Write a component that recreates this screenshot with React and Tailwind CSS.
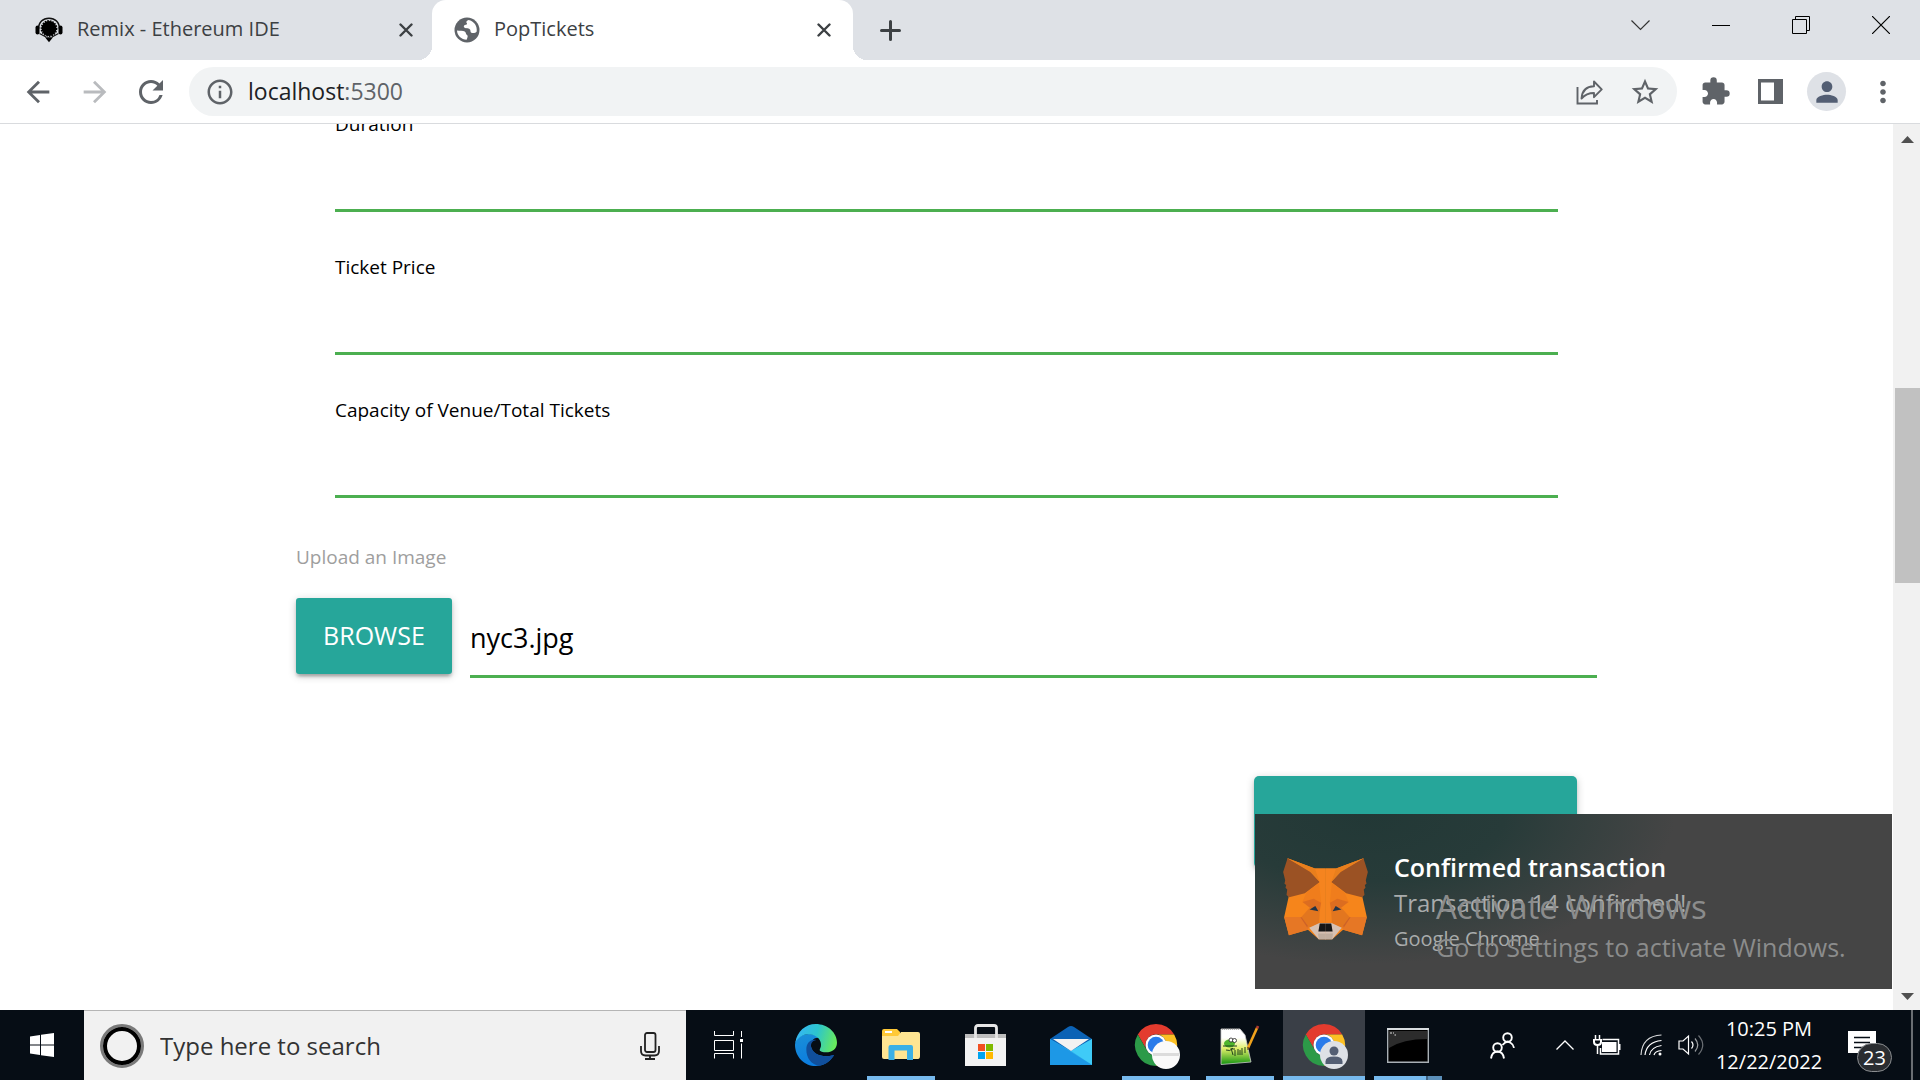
import React from "react";
import {
  MdArrowBack,
  MdArrowForward,
  MdRefresh,
  MdInfoOutline,
  MdStarBorder,
  MdExtension,
  MdPerson,
  MdMoreVert,
} from "react-icons/md";

/* ---------- browser icons ---------- */

function RemixIcon() {
  return (
    <svg viewBox="0 0 28 26" className="h-[26px] w-[28px] shrink-0">
      <path d="M3.500 12C3.500 5 8 1.200 14 1.200S24.500 5 24.500 12" fill="none" stroke="#111" strokeWidth="1.600" />
      <rect x="0.500" y="8.500" width="4" height="9" rx="2" fill="#000" />
      <rect x="23.500" y="8.500" width="4" height="9" rx="2" fill="#000" />
      <circle cx="14" cy="11.500" r="7.400" fill="#000" />
      <circle cx="14" cy="11.500" r="7.600" fill="none" stroke="#000" strokeWidth="1.600" strokeDasharray="1.600 1" />
      <path d="M4.500 16.500 11 20M23.500 16.500 17 20" stroke="#111" strokeWidth="1.200" />
      <path d="M10 20.300h8l-4 5z" fill="#000" />
    </svg>
  );
}

function GlobeIcon() {
  return (
    <svg viewBox="0 0 26 26" className="h-[26px] w-[26px] shrink-0">
      <circle cx="13" cy="13" r="12.500" fill="#5f6368" />
      <path d="M3 13.600c2.600.3 6.200.1 7.700 1 1.500 1 .9 2.700 2.300 3.300 1.300.6.5 2.400-.4 4.900C7.500 22.800 3 18.500 3 13.600z" fill="#fff" />
      <path d="M14.500 3c-2.600 1-2.300 2.400-1.600 3.300.7 1-.8 1.600-2 1.800-1.300.3-1.500 1.900-.3 2.600 1.400.8 4.700.2 5.600 2.100.5 1.200 0 2.500 1.200 3 1.700.7 4.300.1 5.300-1.300C23.500 9 20 4 14.500 3z" fill="#fff" />
    </svg>
  );
}

function CrossIcon() {
  return (
    <svg viewBox="0 0 14 14" className="h-[14px] w-[14px]">
      <path d="M1.500 1.500 12.500 12.500M12.500 1.500 1.500 12.500" stroke="#3c4043" strokeWidth="2.400" strokeLinecap="round" />
    </svg>
  );
}

function ShareIcon() {
  return (
    <svg viewBox="0 0 27 26" className="h-[26px] w-[27px]" fill="none" stroke="#5f6368" strokeWidth="1.900">
      <path d="M1.500 8v16.500h19.500V21" />
      <path d="M18 2.500v4.700C10 7.500 6 12 5.500 19.500 9 15.500 12.500 14 18 14v4.200l7.700-7.800z" strokeLinejoin="round" />
    </svg>
  );
}

function SidePanelIcon() {
  return (
    <svg viewBox="0 0 25 25" className="h-[25px] w-[25px]">
      <path d="M0 0h25v25H0zM3 3.500v18h13v-18z" fill="#5f6368" fillRule="evenodd" />
    </svg>
  );
}

/* ---------- notification artwork ---------- */

function FoxHalf() {
  return (
    <>
      <path d="M53 57 134 87H165V296H145L113 268 57 284 43 230 56 172 60 130z" fill="#f6851b" />
      <path d="M53 57 40 97 46 122 44 132 49 136 47 144 52 149 50 165 58 172 104 160 148 127 120 95z" fill="#9b5224" />
      <path d="M53 57 134 87 148 127 120 97z" fill="#e97f1d" />
      <path d="M134 87 148 127 152 185 146 250H165V87z" fill="#f5841f" />
      <path d="M97 186 108 159 146 130 152 188z" fill="#f07d1c" />
      <path d="M97 186 130 176 152 188 148 213 118 202z" fill="#dc6d20" />
      <path d="M43 230 94 230 118 256 113 268 57 284z" fill="#e67725" />
      <path d="M91 231 122 231 111 261z" fill="#cd6229" />
      <path d="M94 230 118 203 148 213 146 250 117 262z" fill="#e2761f" />
      <path d="M118 208 135 198 144 213z" fill="#233447" />
      <path d="M117 262 147 248 166 248 166 296 145 296z" fill="#d7c1b3" />
      <path d="M143 279 166 279 166 296 145 296z" fill="#c0ad9e" />
      <path d="M148 249 166 249 166 273 144 273z" fill="#161616" />
    </>
  );
}

function FoxIcon() {
  return (
    <svg viewBox="40 56 250 242" className="h-[82px] w-[85px] shrink-0">
      <g>
        <FoxHalf />
      </g>
      <g transform="translate(330 0) scale(-1 1)">
        <FoxHalf />
      </g>
    </svg>
  );
}

/* ---------- taskbar icons ---------- */

function WindowsLogo() {
  return (
    <svg viewBox="0 0 24 24" className="h-6 w-6" fill="#fff">
      <path d="M0 3.400 10 2v9.500H0zM11 1.800 24 0v11.500H11zM0 12.500h10V22L0 20.600zM11 12.500h13V24l-13-1.800z" />
    </svg>
  );
}

function MicIcon() {
  return (
    <svg viewBox="0 0 20 28" className="h-7 w-5" fill="none" stroke="#222" strokeWidth="1.800">
      <rect x="5" y="1" width="10.500" height="19" rx="2" />
      <path d="M1 14v5q0 4.500 4.500 4.500h9Q19 23.500 19 19v-5M10 23.500V27M5 27h10" />
    </svg>
  );
}

function TaskViewIcon() {
  return (
    <svg viewBox="0 0 30 28" className="h-7 w-[30px]" fill="none" stroke="#fff" strokeWidth="1">
      <path d="M.5 0v4.500h19V0M.5 9.500h19v10H.5zM.5 27.500v-5h19v5M27.500 0v6M27.500 12.500v15" />
      <path d="M26 8h3v3h-3z" fill="#fff" stroke="none" />
    </svg>
  );
}

function EdgeIcon() {
  return (
    <svg viewBox="0 0 126 126" className="h-[42px] w-[42px]">
      <defs>
        <linearGradient id="edgeTop" x1="0" y1="0.300" x2="1" y2="0.500">
          <stop offset="0" stopColor="#36b5f5" />
          <stop offset="0.500" stopColor="#2cc5cd" />
          <stop offset="1" stopColor="#68ea5c" />
        </linearGradient>
        <linearGradient id="edgeBody" x1="0.200" y1="0" x2="0.500" y2="1">
          <stop offset="0" stopColor="#1a8fd8" />
          <stop offset="1" stopColor="#0a7be0" />
        </linearGradient>
      </defs>
      <path d="M1 55C8 30 50 20 74 42 55 38 45 55 48 68 52 90 80 102 116 94 104 116 84 126 62 126 28 126 0 98 0 62z" fill="url(#edgeBody)" />
      <path d="M34 76C34 58 46 44 64 48 50 50 45 62 50 73 57 92 85 103 114 93 120 92 116 97 112 101 102 114 88 123 72 125 48 122 34 102 34 76z" fill="#104f9c" />
      <path d="M1 56C6 22 32 0 62 0 98 0 126 26 126 56 126 76 110 85 94 85 84 85 74 82 74 78 74 75 79 70 78 60 77 44 60 30 38 31 20 32 8 43 1 56z" fill="url(#edgeTop)" />
    </svg>
  );
}

function FolderIcon() {
  return (
    <svg viewBox="0 0 38 32" className="h-8 w-[38px]">
      <path d="M0 2q0-2 2-2h13l3 3v4H0z" fill="#ffc937" />
      <path d="M0 7h16l3-4h17q2 0 2 2v22q0 3-2 3H2q-2 0-2-2z" fill="#ffe592" />
      <path d="M3 3h7" stroke="#fff" strokeWidth="2" />
      <path d="M6.500 31V18q0-2 2-2h20.500q2 0 2 2v13H25v-9.500H12.500V31z" fill="#3bb0e6" />
    </svg>
  );
}

function StoreIcon() {
  return (
    <svg viewBox="0 0 42 42" className="h-[42px] w-[42px]">
      <path d="M0 10h41v32H0z" fill="#f3f3f3" />
      <path d="M0 10h41v4H0z" fill="#bdbdbd" />
      <path d="M10.500 14V4q0-2.500 2.500-2.500h16Q31.500 1.500 31.500 4v10" fill="none" stroke="#e6e6e6" strokeWidth="2.800" />
      <path d="M13 20h7v7h-7z" fill="#f25022" />
      <path d="M21 20h7v7h-7z" fill="#7fba00" />
      <path d="M13 28h7v7h-7z" fill="#00a4ef" />
      <path d="M21 28h7v7h-7z" fill="#ffb900" />
    </svg>
  );
}

function MailIcon() {
  return (
    <svg viewBox="0 0 42 39" className="h-[39px] w-[42px]">
      <path d="M0 13 18 1q3-2 6 0l18 12-21 14z" fill="#0b62b5" />
      <path d="M0 13 21 25 42 13V39H0z" fill="#2aa9ea" />
      <path d="M42 13v26L21 25z" fill="#3fcbf7" />
      <path d="M0 13v26h42z" fill="#1d98e6" />
      <path d="M3 13h36L21 25z" fill="#f2f2f2" />
    </svg>
  );
}

function ChromeIcon({ profile }) {
  return (
    <svg viewBox="0 0 42 42" className="h-[42px] w-[42px] overflow-visible">
      <path d="M21 10.500H39.190A21 21 0 0 0 2.810 10.500L11.900 26.250A10.500 10.500 0 0 1 21 10.500Z" fill="#e33b2e" />
      <path d="M39.190 10.500A21 21 0 0 1 21 42L30.100 26.250A10.500 10.500 0 0 0 21 10.500Z" fill="#fcc024" />
      <path d="M21 42A21 21 0 0 1 2.810 10.500L11.900 26.250A10.500 10.500 0 0 0 30.100 26.250Z" fill="#2c9a48" />
      <circle cx="21" cy="21" r="10.500" fill="#fff" />
      <circle cx="21" cy="21" r="8.300" fill="#2a7bea" />
      {profile ? (
        <g>
          <circle cx="31" cy="31" r="14" fill="#dee1e6" />
          <circle cx="31" cy="27" r="4.500" fill="#535e73" />
          <path d="M22.500 40v-2.500q0-5 8.500-5t8.500 5V40z" fill="#535e73" />
        </g>
      ) : (
        <g>
          <circle cx="31" cy="31" r="14" fill="#fafafa" />
          <path d="M18 30.500h26" stroke="#dcdcdc" strokeWidth="3" />
        </g>
      )}
    </svg>
  );
}

function NotepadIcon() {
  return (
    <svg viewBox="0 0 40 40" className="h-10 w-10">
      <defs>
        <linearGradient id="noteFill" x1="0" y1="0" x2="0" y2="1">
          <stop offset="0.250" stopColor="#fff" />
          <stop offset="0.550" stopColor="#e2f06a" />
          <stop offset="1" stopColor="#12930f" />
        </linearGradient>
      </defs>
      <path d="M1 4h19l5 6 6 27L1 39.500z" fill="url(#noteFill)" stroke="#ccc" strokeWidth="0.800" />
      <path d="M2 4h18" stroke="#777" strokeWidth="1.200" strokeDasharray="1 1" />
      <ellipse cx="9.500" cy="18.500" rx="5.500" ry="4" fill="#4fb52c" />
      <circle cx="11" cy="15" r="2" fill="#fff" stroke="#222" strokeWidth="0.800" />
      <circle cx="14.500" cy="15.500" r="2" fill="#fff" stroke="#222" strokeWidth="0.800" />
      <path d="M3 21h14M6 25q4 2 7-2M11 23l2 7M15 25v6M18 24v6M20 25v5M22 23v7M25 22v6M12 24h3" stroke="#20401a" strokeWidth="1" fill="none" />
      <path d="M28 23 37 3" stroke="#f0a21c" strokeWidth="2.600" />
      <path d="M37 3.500 38 1" stroke="#b03a30" strokeWidth="2.600" />
      <path d="M28 25v-3" stroke="#5a3a1a" strokeWidth="1.200" />
    </svg>
  );
}

function TerminalIcon() {
  return (
    <svg viewBox="0 0 42 35" className="h-[35px] w-[42px]">
      <path d="M.7.700h40.600v33.600H.7z" fill="#000" stroke="#a9b0b5" strokeWidth="1.400" />
      <path d="M2 3h38v8Q16 11 2 20z" fill="#2c2c2c" />
      <path d="M0 1h42" stroke="#d8dcdf" strokeWidth="2" />
      <path d="M3 5h2M6 5h1M7.500 7h1.500" stroke="#ddd" />
    </svg>
  );
}

function PeopleIcon() {
  return (
    <svg viewBox="0 0 25 27" className="h-[27px] w-[25px]" fill="none" stroke="#fff" strokeWidth="1.900">
      <circle cx="17.500" cy="5.500" r="4.300" />
      <circle cx="7.500" cy="15.500" r="4.300" />
      <path d="M12.500 13q4-5 8-2.200 3 1.800 3.500 5M1 26.500q1-7 6.500-7t6.500 7" />
    </svg>
  );
}

function BatteryIcon() {
  return (
    <svg viewBox="0 0 28 20" className="h-5 w-7" fill="none" stroke="#fff" strokeWidth="1.500">
      <path d="M9.500 4.500h16v14.500h-18V13" />
      <path d="M9 7h14.500v10H9z" fill="#fff" stroke="none" />
      <path d="M26.500 9v6" strokeWidth="2" />
      <path d="M2.500 0v4M6.500 0v4M4.500 10v9" />
      <path d="M0 4h9v3q0 4-4.500 4T0 7z" fill="#fff" stroke="none" />
      <path d="M2 5.500h5v1.500q0 2-2.500 2T2 7z" fill="#060d15" stroke="none" />
    </svg>
  );
}

function WifiIcon() {
  return (
    <svg viewBox="0 0 22 22" className="h-[22px] w-[22px]" fill="none" stroke="#fff" strokeWidth="1.200">
      <path d="M1 21Q2 2 21.500 1" opacity="0.850" />
      <path d="M5 21Q6.500 8 21.500 6.500M9.500 21Q11 13 21.500 11.500M14 21Q15 17 21.500 16.500" />
      <circle cx="20" cy="20" r="1.500" fill="#fff" stroke="none" />
    </svg>
  );
}

function SpeakerIcon() {
  return (
    <svg viewBox="0 0 27 22" className="h-[22px] w-[27px]" fill="none" stroke="#fff" strokeWidth="1.200">
      <path d="M1 7v8h4l5.500 5V2L5 7z" />
      <path d="M13.500 7.500q3 3.500 0 7" />
      <path d="M17 4.500q5.500 6.500 0 13" opacity="0.600" />
      <path d="M20.500 1.500q8.500 9.500 0 19" opacity="0.400" />
    </svg>
  );
}

function ActionCenterIcon() {
  return (
    <svg viewBox="0 0 28 28" className="h-7 w-7">
      <path d="M0 0h28v22H14l-4 5v-5H0z" fill="#fff" />
      <path d="M6 6.500h16M6 11.500h16M6 16.500h10" stroke="#060d15" strokeWidth="1.300" />
    </svg>
  );
}

/* ---------- browser ---------- */

function TabBar() {
  return (
    <header className="flex h-[60px] shrink-0 items-center bg-[#dee1e6] text-[#3c4043]">
      <div className="flex h-full w-[432px] items-center gap-[14px] pr-[19px] pl-[35px]">
        <RemixIcon />
        <span className="flex-1 pb-[2px] text-[20px]">Remix - Ethereum IDE</span>
        <button aria-label="Close Remix tab"><CrossIcon /></button>
      </div>
      <div className="relative flex h-full w-[421px] items-center gap-[14px] rounded-t-[14px] bg-white pr-[22px] pl-[22px]">
        <span className="absolute bottom-0 -left-[14px] h-[14px] w-[14px] bg-[radial-gradient(circle_at_0_0,transparent_14px,white_14px)]" />
        <span className="absolute -right-[14px] bottom-0 h-[14px] w-[14px] bg-[radial-gradient(circle_at_100%_0,transparent_14px,white_14px)]" />
        <GlobeIcon />
        <span className="flex-1 pb-[2px] text-[20px]">PopTickets</span>
        <button aria-label="Close PopTickets tab"><CrossIcon /></button>
      </div>
      <button aria-label="New tab" className="ml-[27px]">
        <svg viewBox="0 0 21 21" className="h-[21px] w-[21px]">
          <path d="M10.500 1.500v18M1.500 10.500h18" stroke="#3c4043" strokeWidth="3" strokeLinecap="round" />
        </svg>
      </button>
      <div className="mb-[10px] ml-auto flex items-center gap-[62px] pr-[30px]">
        <button aria-label="Search tabs">
          <svg viewBox="0 0 19 11" className="h-[11px] w-[19px]">
            <path d="M.5.500 9.500 9.500 18.500.5" fill="none" stroke="#333" strokeWidth="1.200" />
          </svg>
        </button>
        <button aria-label="Minimize" className="h-px w-[18px] bg-black" />
        <button aria-label="Restore">
          <svg viewBox="0 0 18 18" className="h-[18px] w-[18px]" fill="none" stroke="#000">
            <path d="M.5 3.500h14v14H.5zM3.500 3.500v-3h14v14h-3" />
          </svg>
        </button>
        <button aria-label="Close window">
          <svg viewBox="0 0 18 18" className="h-[18px] w-[18px]">
            <path d="M0 0 18 18M18 0 0 18" stroke="#000" strokeWidth="1.200" />
          </svg>
        </button>
      </div>
    </header>
  );
}

function Toolbar() {
  return (
    <nav className="flex h-16 shrink-0 items-center border-b border-[#d9dbde] bg-white pr-[20px] pl-[21px] text-[#5f6368]">
      <button aria-label="Back"><MdArrowBack size={34} /></button>
      <button aria-label="Forward" className="ml-[23px] text-[#b9bbbe]"><MdArrowForward size={34} /></button>
      <button aria-label="Reload" className="ml-[21px]"><MdRefresh size={36} /></button>
      <div className="ml-[20px] flex h-[49px] flex-1 items-center rounded-full bg-[#f1f3f4] pr-[16px] pl-[16px]">
        <MdInfoOutline size={30} />
        <span className="ml-[13px] flex-1 text-[23px] text-[#202124]">
          localhost<span className="text-[#5f6368]">:5300</span>
        </span>
        <button aria-label="Share"><ShareIcon /></button>
        <button aria-label="Bookmark" className="ml-[26px]"><MdStarBorder size={32} /></button>
      </div>
      <button aria-label="Extensions" className="ml-[23px]"><MdExtension size={31} /></button>
      <button aria-label="Side panel" className="ml-[27px]"><SidePanelIcon /></button>
      <button aria-label="Profile" className="ml-[24px] flex h-[39px] w-[39px] items-center justify-center rounded-full bg-[#dee1e6] text-[#535e73]">
        <MdPerson size={32} />
      </button>
      <button aria-label="Menu" className="ml-[20px]"><MdMoreVert size={34} /></button>
    </nav>
  );
}

function Field({ id, label }) {
  return (
    <div className="mb-[41px]">
      <label htmlFor={id} className="block text-[19px] leading-7 text-black">{label}</label>
      <input id={id} type="text" className="block h-[74px] w-full border-b-3 border-[#4caf50] text-2xl outline-none" />
    </div>
  );
}

const shadow = "shadow-[0_3px_3px_0_rgba(0,0,0,0.14),0_5px_2px_-3px_rgba(0,0,0,0.12),0_2px_8px_0_rgba(0,0,0,0.2)]";

function EventForm() {
  return (
    <form className="mx-auto -mt-[14px] w-[70%] px-3">
      <div className="px-[39px]">
        <Field id="duration" label="Duration" />
        <Field id="price" label="Ticket Price" />
        <Field id="capacity" label="Capacity of Venue/Total Tickets" />
      </div>
      <label htmlFor="file" className="mt-[45px] block text-[19px] leading-7 text-[#9e9e9e]">Upload an Image</label>
      <div className="mt-[27px] flex items-start gap-[18px]">
        <button type="button" className={`h-[76px] w-[156px] rounded-[3px] bg-[#26a69a] text-[25px] text-white ${shadow}`}>BROWSE</button>
        <input id="file" type="text" defaultValue="nyc3.jpg" className="h-20 min-w-0 flex-1 border-b-3 border-[#4caf50] pt-[2px] text-[27px] text-black outline-none" />
      </div>
      <div className="mt-[98px] flex justify-end pr-5">
        <button type="submit" aria-label="Submit" className={`h-[92px] w-[323px] rounded-[5px] bg-[#26a69a] ${shadow}`} />
      </div>
    </form>
  );
}

function Scrollbar() {
  return (
    <div className="flex w-[27px] shrink-0 flex-col items-center bg-[#f1f1f1] pt-3 pb-[10px]">
      <svg viewBox="0 0 13 7" className="ml-[2px] h-[7px] w-[13px]"><path d="M0 7 6.500 0 13 7z" fill="#505050" /></svg>
      <div className="flex w-full flex-1 flex-col pl-[2px]">
        <div className="flex-[245]" />
        <div className="h-[195px] bg-[#c1c1c1]" />
        <div className="flex-[410]" />
      </div>
      <svg viewBox="0 0 13 7" className="ml-[2px] h-[7px] w-[13px]"><path d="M0 0h13L6.500 7z" fill="#505050" /></svg>
    </div>
  );
}

function Toast() {
  return (
    <aside className="absolute right-[28px] bottom-[21px] flex h-[175px] w-[637px] items-start bg-[#454545] bg-[radial-gradient(ellipse_310px_150px_at_110px_0px,#223836_0%,#273b39_45%,#454545_100%)] pt-[44px] pl-[28px]">
      <FoxIcon />
      <div className="ml-[26px]">
        <p className="-mt-[9px] text-[25px] leading-9 font-semibold text-white">Confirmed transaction</p>
        <p className="text-2xl leading-9 text-[#a9acac]">Transaction 14 confirmed!</p>
        <p className="text-[20px] leading-9 text-[#a9acac]">Google Chrome</p>
      </div>
      <div className="absolute top-[73px] left-[181px] whitespace-nowrap text-[#8b8c8c]">
        <p className="text-[33px] leading-10">Activate Windows</p>
        <p className="text-[25px] leading-10">Go to Settings to activate Windows.</p>
      </div>
    </aside>
  );
}

/* ---------- taskbar ---------- */

function TaskButton({ label, open, active, split, children }) {
  return (
    <button aria-label={label} className={`relative flex h-full w-[82px] items-center justify-center ${active ? "bg-[#3a3f47]" : ""}`}>
      {children}
      {open && !split && <span className={`absolute bottom-0 h-1 bg-[#76b9ed] ${active ? "w-full" : "w-[68px]"}`} />}
      {split && (
        <span className="absolute bottom-0 flex h-1 w-[68px]">
          <span className="flex-1 bg-[#76b9ed]" />
          <span className="w-[2px] bg-[#3e6383]" />
          <span className="w-[14px] bg-[#5b8fb9]" />
        </span>
      )}
    </button>
  );
}

function Taskbar() {
  return (
    <footer className="flex h-[70px] shrink-0 bg-[#060d15] text-white">
      <button aria-label="Start" className="flex w-[84px] items-center justify-center"><WindowsLogo /></button>
      <div className="flex w-[602px] items-center border-t border-[#b5b5b5] bg-[#f1f1f1] pr-[26px] pl-4">
        <span className="flex h-11 w-11 shrink-0 rounded-full border-3 border-[#7a7a7a] bg-[#f1f1f1]">
          <span className="flex-1 rounded-full border-4 border-black" />
        </span>
        <input type="text" aria-label="Search" placeholder="Type here to search" className="ml-4 min-w-0 flex-1 bg-transparent text-2xl text-[#333] outline-none placeholder:text-[#333]" />
        <button aria-label="Voice search"><MicIcon /></button>
      </div>
      <div className="flex pl-[2px]">
        <TaskButton label="Task View"><TaskViewIcon /></TaskButton>
        <div className="ml-[5px] flex gap-[3px]">
          <TaskButton label="Edge"><EdgeIcon /></TaskButton>
          <TaskButton label="File Explorer" open><FolderIcon /></TaskButton>
          <TaskButton label="Microsoft Store"><StoreIcon /></TaskButton>
          <TaskButton label="Mail"><MailIcon /></TaskButton>
          <TaskButton label="Chrome" open><ChromeIcon /></TaskButton>
        </div>
        <div className="ml-[2px] flex gap-[2px]">
          <TaskButton label="Notepad++" open><NotepadIcon /></TaskButton>
          <TaskButton label="Chrome, profile" open active><ChromeIcon profile /></TaskButton>
          <TaskButton label="Command Prompt" split><TerminalIcon /></TaskButton>
        </div>
      </div>
      <div className="ml-auto flex items-center">
        <button aria-label="People"><PeopleIcon /></button>
        <button aria-label="Hidden icons" className="ml-[41px]">
          <svg viewBox="0 0 18 10" className="h-[10px] w-[18px]"><path d="M.5 9.500 9 1 17.500 9.500" fill="none" stroke="#fff" strokeWidth="1.300" /></svg>
        </button>
        <button aria-label="Battery" className="ml-[19px]"><BatteryIcon /></button>
        <button aria-label="Network" className="ml-[19px]"><WifiIcon /></button>
        <button aria-label="Volume" className="ml-[16px]"><SpeakerIcon /></button>
        <div className="ml-[9px] w-[110px] text-center text-[20px] leading-[33px] whitespace-nowrap">
          <p>10:25 PM</p>
          <p>12/22/2022</p>
        </div>
        <button aria-label="Notifications" className="relative mr-[35px] ml-[24px]">
          <ActionCenterIcon />
          <span className="absolute top-3 left-[9px] flex h-[29px] w-[35px] items-center justify-center rounded-full border border-[#8a8d90] bg-[#2a2d31] text-[20px] font-medium">23</span>
        </button>
        <span className="mr-[7px] h-[70px] w-[2px] bg-[#6a6e73]" />
      </div>
    </footer>
  );
}

export default function App() {
  return (
    <div className="flex h-screen flex-col overflow-hidden bg-white font-['Open_Sans','Noto_Sans',sans-serif]">
      <TabBar />
      <Toolbar />
      <main className="relative flex min-h-0 flex-1">
        <div className="min-w-0 flex-1 overflow-hidden">
          <EventForm />
        </div>
        <Scrollbar />
        <Toast />
      </main>
      <Taskbar />
    </div>
  );
}
